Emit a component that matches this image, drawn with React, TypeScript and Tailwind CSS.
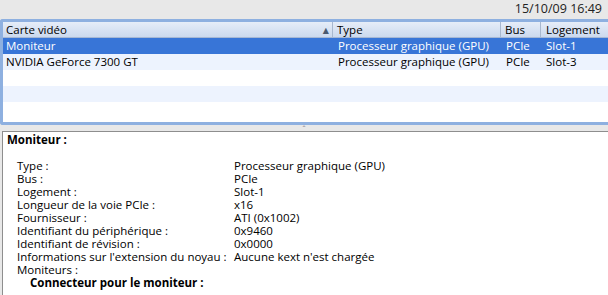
import React from "react";

const rows = [
  { name: "Moniteur", type: "Processeur graphique (GPU)", bus: "PCIe", slot: "Slot-1", sel: true },
  { name: "NVIDIA GeForce 7300 GT", type: "Processeur graphique (GPU)", bus: "PCIe", slot: "Slot-3", sel: false },
  { name: "", type: "", bus: "", slot: "", sel: false },
  { name: "", type: "", bus: "", slot: "", sel: false },
  { name: "", type: "", bus: "", slot: "", sel: false },
];

const details: [string, string][] = [
  ["Type :", "Processeur graphique (GPU)"],
  ["Bus :", "PCIe"],
  ["Logement :", "Slot-1"],
  ["Longueur de la voie PCIe :", "x16"],
  ["Fournisseur :", "ATI (0x1002)"],
  ["Identifiant du périphérique :", "0x9460"],
  ["Identifiant de révision :", "0x0000"],
  ["Informations sur l'extension du noyau :", "Aucune kext n'est chargée"],
  ["Moniteurs :", ""],
];

export default function App() {
  return (
    <div
      className="w-[608px] h-[295px] bg-[#e8e8e8] flex flex-col overflow-hidden text-black"
      style={{ fontFamily: '"Open Sans", "DejaVu Sans", sans-serif' }}
    >
      <div className="h-[19px] flex items-center justify-end pr-[6px] text-[12.5px] leading-none text-[#222]">
        15/10/09 16:49
      </div>
      <div className="h-[106px] border-[3px] border-r-0 border-[#8eb0e0] rounded-l-[3px] bg-white flex flex-col overflow-hidden">
        <div className="h-[16px] flex text-[11.5px] leading-[15px] bg-gradient-to-b from-[#e6edf8] to-[#cbd9ee] border-b border-[#a6b8d4]">
          <div className="w-[330px] pl-[3px] flex items-center justify-between border-r border-[#a8b8cf]">
            <span>Carte vidéo</span>
            <span className="text-[8px] text-[#4a5a70] pr-[3px]">▲</span>
          </div>
          <div className="w-[168px] pl-[4px] flex items-center border-r border-[#a8b8cf]">Type</div>
          <div className="w-[40px] pl-[4px] flex items-center border-r border-[#a8b8cf]">Bus</div>
          <div className="flex-1 pl-[5px] flex items-center">Logement</div>
        </div>
        {rows.map((r, i) => (
          <div
            key={i}
            className={
              "h-[16px] flex text-[11.5px] leading-[16px] " +
              (r.sel ? "bg-[#3875d7] text-white" : i % 2 === 1 ? "bg-[#edf3fe]" : "bg-white")
            }
          >
            <div className="w-[330px] pl-[3px]">{r.name}</div>
            <div className="w-[168px] pl-[5px]">{r.type}</div>
            <div className="w-[40px] pl-[5px]">{r.bus}</div>
            <div className="flex-1 pl-[5px]">{r.slot}</div>
          </div>
        ))}
      </div>
      <div className="h-[6px] flex justify-center items-center">
        <span className="text-[6px] leading-none text-[#777]">⌃</span>
      </div>
      <div className="flex-1 ml-[2px] bg-white border-t border-l border-[#8e8e8e] pl-[4px] pt-[1px] text-[11.5px]">
        <div className="font-bold leading-[14px]">Moniteur :</div>
        <div className="h-[12px]" />
        {details.map(([k, v], i) => (
          <div key={i} className="flex leading-[13px] pl-[10px]">
            <div className="w-[217px]">{k}</div>
            <div>{v}</div>
          </div>
        ))}
        <div className="pl-[23px] font-bold leading-[13px]">Connecteur pour le moniteur :</div>
      </div>
    </div>
  );
}
